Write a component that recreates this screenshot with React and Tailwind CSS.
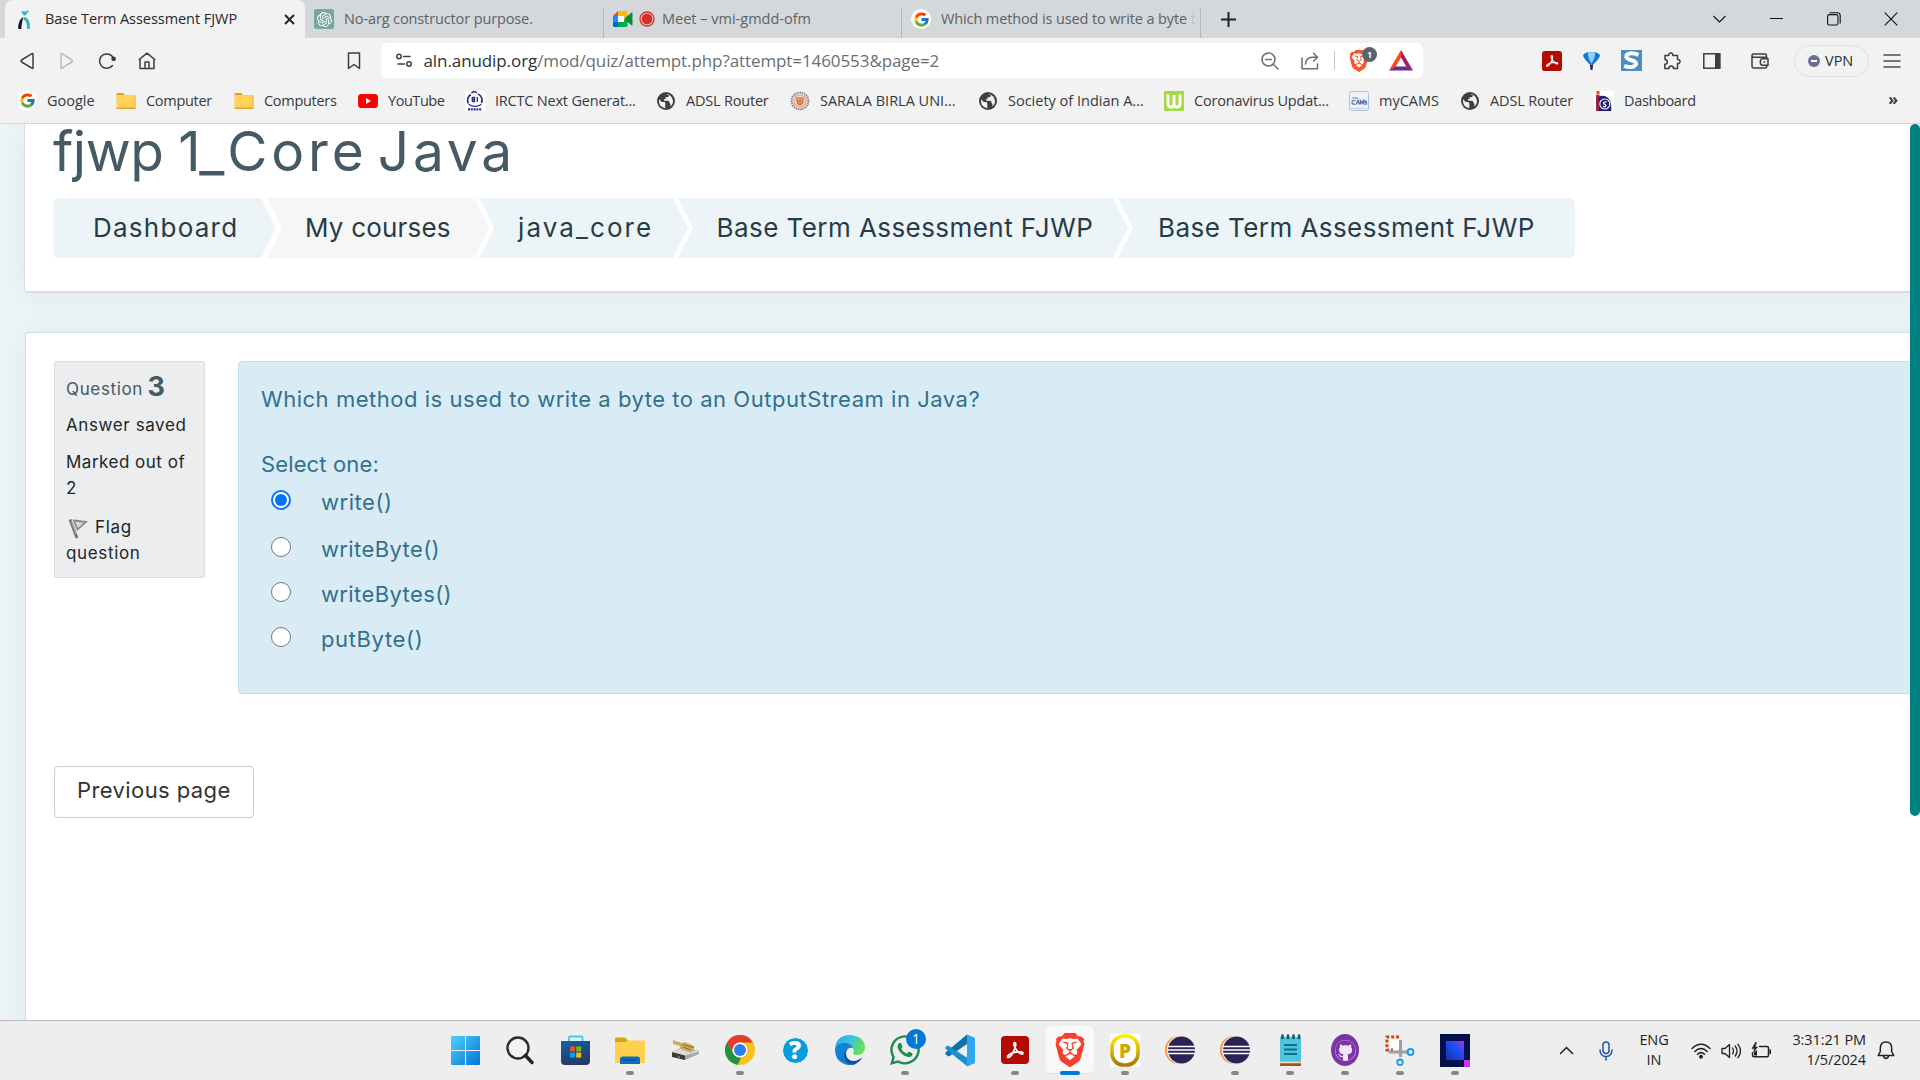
import React from "react";
import { FcGoogle } from "react-icons/fc";
import { SiBrave, SiOpenai } from "react-icons/si";
import { FaGithub, FaWhatsapp } from "react-icons/fa";

const UI = "font-['Open_Sans','Noto_Sans',sans-serif]";
const BODY = "font-['Inter','Noto_Sans',sans-serif]";

/* ---------- small drawings ---------- */
const Google = ({ size = 20 }) => (
  <span className="flex items-center justify-center rounded-full bg-white shrink-0" style={{ width: size, height: size }}>
    <FcGoogle size={size - 3} />
  </span>
);
const Folder = () => (
  <svg width="20" height="18" viewBox="0 0 20 18" className="shrink-0">
    <path d="M0.5 2Q.5 1 1.5 1H7L9 3V6H.5Z" fill="#e0a020" />
    <rect x="0.5" y="3" width="19" height="14" rx="1" fill="#ffd35a" />
    <path d="M.5 16.3H19.5" stroke="#d9a22b" strokeWidth="1.4" />
    <path d="M19 3.5V16" stroke="#e9b541" />
  </svg>
);
const YouTube = () => (
  <svg width="20" height="14" viewBox="0 0 20 14" className="shrink-0">
    <rect width="20" height="14" rx="3.5" fill="#f00" />
    <path d="M8 4L13 7L8 10Z" fill="#fff" />
  </svg>
);
const Irctc = () => (
  <svg width="20" height="20" viewBox="0 0 20 20" className="shrink-0">
    <rect width="20" height="20" fill="#fff" />
    <path d="M6 3.5A6.5 6.5 0 0 0 3.4 12.5M13 3A6.5 6.5 0 0 1 16.4 12" stroke="#2b2f86" strokeWidth="1.7" fill="none" />
    <path d="M6.5 2Q9-.5 12 2" stroke="#2b2f86" strokeWidth="1.6" fill="none" />
    <path d="M3.6 13.2Q10 17.4 16.4 13.2" stroke="#2b2f86" strokeWidth="1.2" fill="none" />
    <path d="M7.3 6V11M7.3 6.5H9.5V10.5H7.3M12.3 6V11M7.3 8.5H9.5" stroke="#2b2f86" strokeWidth="1.3" fill="none" />
    <path d="M3 18.300H17" stroke="#2b2f86" strokeWidth="2.200" strokeDasharray="2 .800" />
  </svg>
);
const Globe = () => (
  <svg width="20" height="20" viewBox="0 0 20 20" className="shrink-0">
    <circle cx="10" cy="10" r="9" fill="#3c4043" />
    <path d="M3 8.200L5.800 11H8.500Q9.500 12 9.300 13.200V17.200Q3.200 16.200 3 10Z" fill="#f2f2f2" />
    <path d="M10 3H12.500Q13.500 5.500 11.500 6.200H9.500V8.200H8V9.800H12Q13.600 10 13.600 12L14.600 13.200L14 15.500Q17 13.500 17 10Q16.400 4 10 3Z" fill="#f2f2f2" />
  </svg>
);
const Sarala = () => (
  <svg width="20" height="20" viewBox="0 0 20 20" className="shrink-0">
    <circle cx="10" cy="10" r="9.500" fill="#e9dfd9" />
    <circle cx="10" cy="10" r="8.400" fill="none" stroke="#7f7894" strokeWidth="1.800" strokeDasharray="1.300 1" />
    <circle cx="10" cy="10" r="6" fill="none" stroke="#e2a27a" strokeWidth="1.200" />
    <path d="M7 7H13V10Q13 13 10 14Q7 13 7 10Z" fill="#f4b183" stroke="#d2672e" strokeWidth="1.200" />
    <path d="M7 10H13M10 7V14" stroke="#d2672e" />
  </svg>
);
const WIcon = () => (
  <svg width="20" height="20" viewBox="0 0 20 20" className="shrink-0">
    <rect width="20" height="20" rx="1" fill="#a4da45" />
    <path d="M4 3.500V13Q4 16 7 16Q10 16 10 13V4V13Q10 16 13 16Q16 16 16 13V3.500" fill="none" stroke="#fff" strokeWidth="2.900" />
  </svg>
);
const Cams = () => (
  <svg width="20" height="20" viewBox="0 0 20 20" className="shrink-0">
    <rect x=".5" y=".5" width="19" height="19" rx="2" fill="#eef3fb" stroke="#a9c0e2" />
    <path d="M3.500 7H9" stroke="#8a8f99" strokeWidth="1.600" strokeDasharray="1.500 .400" />
    <path d="M6.500 9.600H4.200Q3 9.600 3 11.400Q3 13.200 4.200 13.200H6.500M7.300 13.400L9 9.400L10.400 13.400M11.400 13.400V9.600L12.900 12L14.300 9.600V13.400M17.600 9.800H15.800V11.400H17.400V13.200H15.400" stroke="#5674b5" strokeWidth="1.300" fill="none" />
    <path d="M1.500 17.500H18.500" stroke="#c9d8ee" strokeWidth="1.500" />
  </svg>
);
const DashIcon = () => (
  <svg width="20" height="20" viewBox="0 0 20 20" className="shrink-0">
    <rect width="20" height="20" fill="#fff" />
    <rect x="2.500" y="0" width="3" height="3.500" fill="#f0431e" />
    <path d="M2 4H5.500V20H2Z" fill="#9c2447" />
    <path d="M4.500 6Q6 4 11 5Q17.800 7 17.400 20H5Z" fill="#221f6e" />
    <circle cx="10.800" cy="13" r="5" fill="none" stroke="#fff" strokeWidth="1.100" />
    <path d="M12.500 10.800Q9 10.600 9.600 12.800Q12.500 13.500 11.800 15.300Q10.500 16.300 9 15.300" stroke="#fff" strokeWidth="1.200" fill="none" />
  </svg>
);
const Acrobat = ({ size }) => (
  <svg width={size} height={size} viewBox="0 0 28 28" className="shrink-0">
    <rect width="28" height="28" rx="4" fill="#b30b00" />
    <path d="M13.600 6.500C11.800 6.800 13.200 12 17 15.800C19.500 18 22 18.800 22 17.200C22 15.300 14.800 15.400 10.500 17.200C6.500 19 5.400 21.500 7.400 21.500C10 21.300 14.800 12.600 14.800 8.600C14.800 7.200 14.300 6.500 13.600 6.500Z" fill="none" stroke="#fff" strokeWidth="1.700" />
  </svg>
);
const Brave = ({ size, color }) => (
  <span className="relative flex items-center justify-center shrink-0" style={{ width: size, height: size }}>
    <span className="absolute left-1/4 top-[15%] h-[66%] w-1/2 rounded-b-full bg-white" />
    <SiBrave size={size} color={color} className="relative" />
  </span>
);

/* ---------- tab strip ---------- */
const TabStrip = () => (
  <div className="flex h-[38px] bg-[#d4d8db] pl-[5px] text-[14.5px] leading-[38px]">
    <div className="flex h-[38px] w-[300px] items-center rounded-t-[8px] bg-[#f2f2f2] pl-[12px]">
      <svg width="14" height="20" viewBox="0 0 14 20" className="mt-[1px]">
        <path d="M4.500 1.500L8 3L11.500 1" stroke="#2bb6bd" strokeWidth="1.500" fill="none" />
        <circle cx="7.600" cy="3.400" r="2" fill="#2bb6bd" />
        <path d="M1.200 19Q1 9.500 6.400 7.200Q5.200 10 4.200 19Z" fill="#16181b" />
        <path d="M6.500 7Q13.500 7 12.800 19H10.200Q10 10.500 6.500 9.500Z" fill="#2bb6bd" />
      </svg>
      <span className="ml-[14px] w-[239px] tracking-[-0.05px] text-[#26292c]">Base Term Assessment FJWP</span>
      <svg width="11" height="11" viewBox="0 0 11 11"><path d="M1 1L10 10M10 1L1 10" stroke="#222" strokeWidth="1.900" /></svg>
    </div>
    <div className="flex w-[299px] items-center border-r pl-[9px] text-[#5d6266] [border-image:linear-gradient(transparent_9px,#b4b8bb_9px)_1]">
      <span className="flex h-5 w-5 items-center justify-center rounded-[2px] bg-[#74aa9c]"><SiOpenai size={15} color="#fff" /></span>
      <span className="ml-[10px] tracking-[-0.12px]">No-arg constructor purpose.</span>
    </div>
    <div className="flex w-[298px] items-center border-r pl-[9px] text-[#5d6266] [border-image:linear-gradient(transparent_9px,#b4b8bb_9px)_1]">
      <svg width="20" height="16" viewBox="0 0 20 16">
        <path d="M0 5L5 0V5Z" fill="#ea4335" /><path d="M5 0H13Q14.500 0 14.500 1.500V8L11 6V5H5Z" fill="#fbbc04" />
        <path d="M0 5H5V11H0Z" fill="#2684fc" /><path d="M0 11H5V16H1.500Q0 16 0 14.500Z" fill="#0066da" />
        <path d="M5 11H11V9L14.500 8V14.500Q14.500 16 13 16H5Z" fill="#00ac47" /><path d="M11 8L18.500 1.500Q19.500 1.200 19.500 2.500V13.500Q19.500 14.800 18.500 14.300Z" fill="#0a8a3c" />
        <path d="M5 5H11V11H5Z" fill="#fff" />
      </svg>
      <svg width="16" height="16" viewBox="0 0 16 16" className="ml-[6px]"><circle cx="8" cy="8" r="7" fill="none" stroke="#d93025" strokeWidth="1.300" /><circle cx="8" cy="8" r="5.400" fill="#d93025" /></svg>
      <span className="ml-[7px]">Meet – vmi-gmdd-ofm</span>
    </div>
    <div className="flex w-[299px] items-center border-r pl-[9px] text-[#5d6266] [border-image:linear-gradient(transparent_9px,#b4b8bb_9px)_1]">
      <Google />
      <span className="ml-[10px] tracking-[-0.12px]">Which method is used to write a byte <span className="text-[#bfc3c6]">t</span></span>
    </div>
    <div className="flex flex-1 items-center pl-[20px] pr-[22px]">
      <svg width="15" height="15" viewBox="0 0 15 15"><path d="M7.500 0V15M0 7.500H15" stroke="#222" strokeWidth="2" /></svg>
      <div className="ml-auto flex items-center">
        <svg width="13" height="8" viewBox="0 0 13 8" className="mr-[44px]"><path d="M.5 1L6.500 7L12.500 1" stroke="#111" fill="none" strokeWidth="1.100" /></svg>
        <svg width="13" height="2" viewBox="0 0 13 2" className="mr-[44px]"><path d="M0 .5H13" stroke="#111" strokeWidth="1" /></svg>
        <svg width="14" height="14" viewBox="0 0 14 14" className="mr-[43px]"><rect x=".600" y="2.600" width="10.400" height="10.400" rx="1.800" fill="none" stroke="#111" strokeWidth="1.100" /><path d="M2.500 .700H10.500Q13.200 .700 13.200 3.400V11.500" fill="none" stroke="#111" strokeWidth="1.100" /></svg>
        <svg width="14" height="14" viewBox="0 0 14 14"><path d="M.700 .700L13.300 13.300M13.300 .700L.700 13.300" stroke="#111" strokeWidth="1.100" /></svg>
      </div>
    </div>
  </div>
);

/* ---------- toolbar ---------- */
const line = { fill: "none", stroke: "#3b3f43", strokeWidth: 1.5, strokeLinecap: "round", strokeLinejoin: "round" };
const Toolbar = () => (
  <div className="flex h-[45px] items-center pl-[19px] pr-[19px]">
    <svg width="16" height="18" viewBox="0 0 16 18" {...line}><path d="M14 2.200V15.800Q14 17 13 16.200L2.600 10Q1.400 9 2.600 8L13 1.600Q14 1 14 2.200Z" /></svg>
    <svg width="16" height="18" viewBox="0 0 16 18" {...line} stroke="#b9bcbf" className="ml-[24px]"><path d="M2 2.200V15.800Q2 17 3 16.200L12.900 10Q14 9 12.900 8L3 1.600Q2 1 2 2.200Z" /></svg>
    <svg width="19" height="18" viewBox="0 0 19 18" {...line} className="ml-[23px]"><path d="M14.500 13.500A7.200 7.200 0 1 1 15.500 6.500" /><circle cx="15.600" cy="6.800" r="1.600" fill="#3b3f43" /></svg>
    <svg width="18" height="18" viewBox="0 0 18 18" {...line} className="ml-[21px]"><path d="M1.200 7.500L9 1.200L16.800 7.500M2 7V16.500H16V7M7 16.500V10H11V16.500" /></svg>
    <svg width="14" height="18" viewBox="0 0 14 18" {...line} className="ml-[191px]"><path d="M1.500 1H12.500V16.500L7 12.500L1.500 16.500Z" /></svg>
    <div className="ml-[20px] flex h-[35px] w-[1042px] items-center rounded-[6px] bg-white pl-[15px] pr-[10px]">
      <svg width="16" height="15" viewBox="0 0 16 15" {...line}><circle cx="3" cy="3.500" r="2.200" /><path d="M7.500 3.500H14" /><circle cx="13" cy="11" r="2.200" /><path d="M2 11H8.500" /></svg>
      <span className="ml-[11.5px] whitespace-nowrap text-[17px] tracking-[-0.09px] text-[#6a6e72]"><span className="text-[#2d3135]">aln.anudip.org</span>/mod/quiz/attempt.php?attempt=1460553&amp;page=2</span>
      <div className="ml-auto flex items-center">
        <svg width="18" height="18" viewBox="0 0 18 18" {...line} stroke="#6b6f73"><circle cx="7.500" cy="7.500" r="6.500" /><path d="M12.300 12.300L17 17M4.700 7.500H10.300" /></svg>
        <svg width="18" height="18" viewBox="0 0 18 18" {...line} stroke="#6b6f73" className="ml-[22px]"><path d="M1 6V16.800H16.500V12M4.500 12Q5 5.500 11 5.200H15.500M12.500 1.200L16.500 5.200L12.500 9" /></svg>
        <span className="ml-[15px] h-[19px] w-px bg-[#c4c6c8]" />
        <span className="relative ml-[13px] flex">
          <Brave size={22} color="#fb542b" />
          <span className="absolute -top-[3px] left-[14px] h-[15px] w-[15px] rounded-full bg-[#5c6370] text-center text-[9px] font-bold leading-[15px] text-white">1</span>
        </span>
        <svg width="24" height="21" viewBox="0 0 24 21" className="ml-[19px]">
          <path d="M12 0L0 20.500L6.500 17L12 7.500Z" fill="#ff4724" /><path d="M12 0L24 20.500L17.500 17L12 7.500Z" fill="#9e1f63" /><path d="M0 20.500H24L17.500 16.500H6.500Z" fill="#662d91" />
        </svg>
      </div>
    </div>
    <div className="ml-auto flex items-center">
      <Acrobat size={20} />
      <svg width="19" height="20" viewBox="0 0 19 20" className="ml-[20px]">
        <path d="M1 4.500Q2 1 9.500 1Q17 1 18 4.500Q17 8 11.200 13.500H7.800Q2 8 1 4.500Z" fill="#1477d4" /><path d="M6 1.800Q9.500 0 13 1.800Q13.500 7 9.500 12.500Q5.500 7 6 1.800Z" fill="#8fd2fb" /><path d="M7.800 13.500H11.200L10.500 19H8.500Z" fill="#23364f" />
      </svg>
      <svg width="21" height="21" viewBox="0 0 21 21" className="ml-[20px]">
        <rect x=".5" y=".5" width="20" height="20" fill="#4b8ec4" stroke="#4b8ec4" />
        <path d="M17.500 4.800Q10 2 6 4.600Q3.800 7.600 8.500 9.600L13.500 11.400Q17 14 13 16.300Q8.500 18 3.200 15.800" fill="none" stroke="#fff" strokeWidth="4" />
      </svg>
      <svg width="18" height="18" viewBox="0 0 18 18" {...line} className="ml-[21px]"><path d="M2 3.500H5.800Q5.500 1 7.800 1Q10 1 9.800 3.500H14.500V7.500Q17 7.300 17 9.500Q17 11.800 14.500 11.500V16.500H10.500Q10.500 14 8.200 14Q6 14 6 16.500H1.800V12.300Q4.300 12.200 4.300 10Q4.300 7.800 2 7.500Z" /></svg>
      <svg width="18" height="16" viewBox="0 0 18 16" className="ml-[22px]"><rect x=".800" y=".800" width="16" height="14.400" fill="none" stroke="#3b3f43" strokeWidth="1.500" /><rect x="12" y=".5" width="5.200" height="15" fill="#3b3f43" /></svg>
      <svg width="18" height="16" viewBox="0 0 18 16" {...line} className="ml-[30px]"><path d="M15.500 4V2.500Q15.500 1 14 1H2.500Q1 1 1 2.500V13Q1 15 2.800 15H14Q15.800 15 15.800 13M1 2.600Q1 4.200 2.800 4.200H15.800V5.500M17 5.800H11.500Q9.300 5.800 9.300 9Q9.300 12.300 11.500 12.300H17ZM13 9H13.600" /></svg>
      <span className="ml-[25px] flex h-[32px] w-[75px] items-center rounded-full border border-[#dfe0e2] pl-[13px] text-[14.5px] tracking-[0px] text-[#2b2f33]">
        <span className="mr-[5px] flex h-[12px] w-[12px] items-center justify-center rounded-full bg-[#6b7090]"><span className="h-[2px] w-[6px] bg-white" /></span>VPN
      </span>
      <svg width="18" height="14" viewBox="0 0 18 14" className="ml-[14px]"><path d="M.5 1H17.500M.5 7H17.500M.5 13H17.500" stroke="#4a4e53" strokeWidth="1.500" /></svg>
    </div>
  </div>
);

/* ---------- bookmarks ---------- */
const bookmarks = [
  [<Google />, "Google", "w-[99px]"],
  [<Folder />, "Computer", "w-[118px] tracking-[-0.3px]"],
  [<Folder />, "Computers", "w-[124px] tracking-[-0.3px]"],
  [<YouTube />, "YouTube", "w-[107px] tracking-[-0.45px]"],
  [<Irctc />, "IRCTC Next Generat...", "w-[191px] tracking-[-0.2px]"],
  [<Globe />, "ADSL Router", "w-[134px] tracking-[-0.2px]"],
  [<Sarala />, "SARALA BIRLA UNI...", "w-[188px]"],
  [<Globe />, "Society of Indian A...", "w-[186px] tracking-[0px]"],
  [<WIcon />, "Coronavirus Updat...", "w-[185px] tracking-[-0.2px]"],
  [<Cams />, "myCAMS", "w-[111px] tracking-[0px]"],
  [<Globe />, "ADSL Router", "w-[134px] tracking-[-0.15px]"],
  [<DashIcon />, "Dashboard", "w-[120px] tracking-[-0.35px]"],
];
const Bookmarks = () => (
  <div className="flex h-[41px] items-center border-b border-[#d4d5d7] pb-[5px] pl-[17px] pr-[22px] text-[14.5px] text-[#36393d]">
    {bookmarks.map(([icon, label, cls], i) => (
      <div key={i} className={"flex shrink-0 items-center gap-[10px] whitespace-nowrap " + cls}>
        {icon}
        <span>{label}</span>
      </div>
    ))}
    <span className="ml-auto pb-[3px] text-[16px] font-bold leading-none">»</span>
  </div>
);

/* ---------- page ---------- */
const crumbs = [
  ["Dashboard", "w-[223px] pl-[40px] bg-[#ecf4f8] tracking-[1.25px] rounded-l-[6px] [clip-path:polygon(0_0,calc(100%-15px)_0,100%_50%,calc(100%-15px)_100%,0_100%)]"],
  ["My courses", "w-[222px] -ml-[9px] pl-[38px] bg-[#f6f6f6] tracking-[0.2px] [clip-path:polygon(0_0,calc(100%-15px)_0,100%_50%,calc(100%-15px)_100%,0_100%,15px_50%)]"],
  ["java_core", "w-[209px] -ml-[10px] pl-[39px] bg-[#ecf4f8] tracking-[2.1px] [clip-path:polygon(0_0,calc(100%-15px)_0,100%_50%,calc(100%-15px)_100%,0_100%,15px_50%)]"],
  ["Base Term Assessment FJWP", "w-[450px] -ml-[10px] pl-[38.5px] bg-[#ecf4f8] tracking-[0.44px] [clip-path:polygon(0_0,calc(100%-15px)_0,100%_50%,calc(100%-15px)_100%,0_100%,15px_50%)]"],
  ["Base Term Assessment FJWP", "w-[457px] -ml-[10px] pl-[40px] bg-[#ecf4f8] tracking-[0.44px] rounded-r-[6px] [clip-path:polygon(0_0,100%_0,100%_100%,0_100%,15px_50%)]"],
];
const answers = [
  ["write()", "mt-[16px] tracking-[0.55px]", true],
  ["writeByte()", "mt-[25px] tracking-[0.4px]", false],
  ["writeBytes()", "mt-[23px] tracking-[0.4px]", false],
  ["putByte()", "mt-[23px] tracking-[0.65px]", false],
];
const Page = () => (
  <main className={"flex h-[896px] overflow-hidden bg-[#ebf4f7] " + BODY}>
    <div className="flex w-[1910px] flex-col overflow-hidden pl-[24px]">
      <header className="h-[169px] w-[1900px] shrink-0 rounded-b-[4px] border-b-2 border-l border-[#d9e0e4] bg-white pl-[28px] shadow-[0_4px_30px_rgba(0,0,0,0.05)]">
        <h1 className="-mt-[3px] h-[60px] whitespace-nowrap text-[55px] leading-[60px] tracking-[3.8px] text-[#455a64] [word-spacing:-9px]">
          <span className="tracking-[-0.5px] [word-spacing:0px]">fjwp 1</span><span className="-ml-[1px] tracking-[3px]">_</span>Core Java
        </h1>
        <nav className="mt-[17px] flex h-[60px] text-[26px] leading-[60px] text-[#263c47]">
          {crumbs.map(([t, cls], i) => (
            <span key={i} className={"shrink-0 whitespace-nowrap " + cls}>{t}</span>
          ))}
        </nav>
      </header>
      <section className="relative ml-px mt-[39px] h-[720px] w-[1900px] shrink-0 rounded-t-[4px] border-l border-t border-[#d3dce1] bg-white pl-[28px] pt-[28px] shadow-[0_0_30px_rgba(0,0,0,0.05)]">
        <div className="flex items-start">
          <aside className="h-[217px] w-[152px] rounded-[2px] border border-[#dcdfe2] bg-[#ecedef] pl-[11px] text-[17px] leading-[26px] text-[#212529]">
            <h3 className="mt-[7px] h-[36px] whitespace-nowrap leading-[36px] tracking-[0.65px] text-[#455a64]"><span className="relative -top-[1px]">Question</span> <b className="-ml-[1px] text-[27px] font-bold">3</b></h3>
            <div className="mt-[7px] tracking-[0.6px]">Answer saved</div>
            <div className="mt-[11px] tracking-[0.5px]">Marked out of<br />2</div>
            <div className="mt-[13px] tracking-[0.65px]">
              <svg width="24" height="22" viewBox="0 0 24 22" className="mr-[5px] inline-block align-[-7px]">
                <path d="M4 1.500L11 20" stroke="#777" strokeWidth="3" /><path d="M8 2.500L20 4L11.500 11.500Z" fill="#d8d9da" stroke="#8b8b8b" strokeWidth="1.800" /><path d="M5.500 3L10 16" stroke="#b5b5b5" />
              </svg>Flag<br />question
            </div>
          </aside>
          <div className="ml-[33px] h-[333px] w-[1700px] rounded-[4px] border border-[#bce0f1] bg-[#d9ecf5] pl-[22px] text-[22px] leading-none text-[#31708f]">
            <p className="mt-[26px] h-[22px] tracking-[0.53px]">Which method is used to write a byte to an OutputStream in Java?</p>
            <p className="mt-[43px] h-[22px] tracking-[0.15px]">Select one:</p>
            {answers.map(([t, cls, on]) => (
              <label key={t} className={"flex h-[22px] items-center " + cls}>
                <span className={"-mt-[4px] ml-[10px] flex h-[20px] w-[20px] shrink-0 items-center justify-center rounded-full bg-white " + (on ? "border-2 border-[#0a75ff]" : "border-[1.5px] border-[#767676]")}>
                  {on && <span className="h-[12px] w-[12px] rounded-full bg-[#0075ff]" />}
                </span>
                <span className="ml-[30px]">{t}</span>
              </label>
            ))}
          </div>
        </div>
        <button className="mt-[72px] block h-[52px] w-[200px] rounded-[4px] border-[1.5px] border-[#cdcdcd] bg-white pb-[3px] pl-[22px] text-left text-[22px] tracking-[0.4px] text-[#333]">Previous page</button>
      </section>
    </div>
    <div className="w-[10px] bg-white"><div className="h-[692px] rounded-full bg-[#008080]" /></div>
  </main>
);

/* ---------- taskbar ---------- */
const Windows = () => (
  <svg width="29" height="29" viewBox="0 0 29 29"><defs><linearGradient id="win" x1="0" y1="0" x2="1" y2="1"><stop offset="0" stopColor="#4fd0fb" /><stop offset="1" stopColor="#0673d6" /></linearGradient></defs>
    <path d="M1 0H14V14H0V1Q0 0 1 0ZM15 0H28Q29 0 29 1V14H15ZM0 15H14V29H1Q0 29 0 28ZM15 15H29V28Q29 29 28 29H15Z" fill="url(#win)" /></svg>
);
const Search = () => (
  <svg width="28" height="29" viewBox="0 0 28 29"><circle cx="12" cy="12" r="10.500" fill="#f3f3f3" stroke="#2b2b2b" strokeWidth="2.400" /><path d="M19.500 19.500L26 26.500" stroke="#222" strokeWidth="3.400" strokeLinecap="round" /></svg>
);
const Store = () => (
  <svg width="29" height="30" viewBox="0 0 29 30"><defs><linearGradient id="store" x1="0" y1="0" x2="0.4" y2="1"><stop offset="0" stopColor="#0f62ab" /><stop offset="1" stopColor="#253b66" /></linearGradient></defs>
    <path d="M8 7V2.500Q8 1.500 9 1.500H20.500Q21.500 1.500 21.500 2.500V7" fill="none" stroke="#3ccbf4" strokeWidth="1.800" />
    <path d="M0 6H29V26Q29 30 25 30H4Q0 30 0 26Z" fill="url(#store)" />
    <path d="M9 11.500H14V16.500H9Z" fill="#f25022" /><path d="M15.200 11.500H20.200V16.500H15.200Z" fill="#7fba00" /><path d="M9 17.600H14V22.600H9Z" fill="#00a4ef" /><path d="M15.200 17.600H20.200V22.600H15.200Z" fill="#ffb900" /></svg>
);
const Explorer = () => (
  <svg width="30" height="27" viewBox="0 0 30 27"><path d="M0 2Q0 .5 1.500 .5H10L13 3.500V8H0Z" fill="#e0a010" /><path d="M0 5H11L13 3.500H29Q30 3.500 30 4.500V26H0Z" fill="#ffd04e" /><path d="M5 27V22Q5 19.500 7.500 19.500H22.500Q25 19.500 25 22V27Z" fill="#0f6cbd" /><path d="M8 23H22" stroke="#0a4a8c" strokeWidth="1.200" /></svg>
);
const Disk = () => (
  <svg width="29" height="22" viewBox="0 0 29 22"><path d="M1 13L12 8L28 12V15L14 21L1 17Z" fill="#a8a8a8" /><path d="M1 13L14 16V21L1 18Z" fill="#3a3c3a" /><path d="M1 13L12 9L28 12.500L14 16.500Z" fill="#dcdcdc" /><path d="M2 1L11 4L14 3L23 7V12L19 13.500L9 10V7L2 5Z" fill="#cfae62" /><path d="M11 5.500L23 8.500M12 8L20 11" stroke="#8a6a25" /><path d="M8 19V17" stroke="#4caf50" strokeWidth="1.500" /></svg>
);
const Chrome = () => (
  <svg width="30" height="30" viewBox="0 0 48 48"><circle cx="24" cy="24" r="24" fill="#fbc116" /><path d="M3.200 12A24 24 0 0 1 44.800 12H24A12 12 0 0 0 13.600 30Z" fill="#e33b2e" /><path d="M3.200 12L13.600 30Q18 36.500 26 36L20 47.800A24 24 0 0 1 3.200 12Z" fill="#229342" /><path d="M34.400 30L24 48H22L28 35Z" fill="#fbc116" /><circle cx="24" cy="24" r="12" fill="#fff" /><circle cx="24" cy="24" r="9.600" fill="#2f7df0" /></svg>
);
const Help = () => (
  <span className="flex h-[27px] w-[27px] items-center justify-center rounded-full border border-white bg-[#0a9bdc] text-[24px] font-extrabold leading-none text-white">?</span>
);
const Edge = () => (
  <svg width="30" height="30" viewBox="0 0 30 30"><defs><linearGradient id="edgeTop" x1="0" y1="0" x2="1" y2="0.300"><stop offset="0" stopColor="#2aa8dd" /><stop offset="0.500" stopColor="#35c1e8" /><stop offset="1" stopColor="#66e05a" /></linearGradient></defs>
    <path d="M0 14Q1 0 15 0Q29 1 30 12Q30 20 22 20Q17 20 18.500 17Q20 12.500 14 10Q5 8 0 14Z" fill="url(#edgeTop)" />
    <path d="M0 14Q3 7 11 8Q17 9 18 13Q12 12 11 18Q11 27 22 28.500Q18 30.500 13 30Q0 27.500 0 14Z" fill="#1280d6" />
    <path d="M11.500 15Q9 20 13 24Q19 29 27.500 22Q24.500 28 18 29.700Q10 29 9 21Q9 17 11.500 15Z" fill="#12529e" /></svg>
);
const WhatsApp = () => (
  <span className="relative flex"><FaWhatsapp size={34} color="#1f8b53" /><span className="absolute -top-[4px] left-[18px] h-[20px] w-[20px] rounded-full bg-[#0078d7] text-center text-[14px] leading-[20px] text-white">1</span></span>
);
const VsCode = () => (
  <svg width="30" height="33" viewBox="0 0 30 33"><path d="M22 .5V10L4 22.500L.5 20.500V18.500Z" fill="#0f70ad" /><path d="M.5 13L3 11.500L22.500 24V32.500L.5 14.800Z" fill="#1b8ed0" /><path d="M22 .5L29 3.500Q30 4 30 5V28Q30 29 29 29.500L22 32.500Z" fill="#2fa7ee" /></svg>
);
const PIcon = () => (
  <svg width="30" height="33" viewBox="0 0 30 33"><defs><linearGradient id="pring" x1="0" y1="0" x2="0" y2="1"><stop offset="0" stopColor="#fff000" /><stop offset="1" stopColor="#b07800" /></linearGradient></defs>
    <rect width="30" height="33" fill="#fff" /><rect x="2" y="2" width="26" height="29" rx="11.500" fill="#fff" stroke="url(#pring)" strokeWidth="3.600" />
    <text x="15" y="23.500" textAnchor="middle" fontFamily="Open Sans" fontWeight="800" fontSize="19" fill="#cfa800">P</text></svg>
);
const Eclipse = () => (
  <svg width="30" height="30" viewBox="0 0 30 30"><circle cx="14" cy="15" r="14" fill="#f7941e" /><circle cx="16" cy="15" r="14.300" fill="#eeeeee" /><circle cx="16.500" cy="15" r="13.500" fill="#2c2255" /><path d="M3 11.500H30M3 15H30M3 18.500H30" stroke="#fff" strokeWidth="1.600" /></svg>
);
const Notepad = () => (
  <svg width="23" height="33" viewBox="0 0 23 33"><rect x="1" y="3" width="21" height="27" fill="#50c3dc" /><path d="M1 29H22V32H1Z" fill="#a55312" /><path d="M1 28.500H22" stroke="#f0e4d0" strokeWidth="1.500" /><path d="M5 11H18M5 15.500H18M5 20H18" stroke="#0d6f8f" strokeWidth="1.800" /><path d="M3.500 1.500V4M9 1.500V4M14.500 1.500V4M20 1.500V4" stroke="#0d5a75" strokeWidth="2.600" strokeLinecap="round" /></svg>
);
const Github = () => (
  <span className="flex h-[32px] w-[28px] items-center justify-center rounded-[50%] bg-[#7a34a8]"><span className="flex items-center justify-center rounded-full bg-[#f3e6fa]"><FaGithub size={21} color="#7a34a8" /></span></span>
);
const Snip = () => (
  <svg width="30" height="31" viewBox="0 0 30 31"><rect x="2" y="2" width="12" height="13" fill="#fff" /><path d="M14 2H2V15H8" fill="none" stroke="#d2450f" strokeWidth="3" strokeDasharray="3 1.800" /><path d="M15.500 5V22M4 17H24" stroke="#9aa0a6" strokeWidth="3" /><circle cx="25.500" cy="17" r="3" fill="none" stroke="#1a9be6" strokeWidth="1.800" /><circle cx="15" cy="27.300" r="2.800" fill="none" stroke="#1a9be6" strokeWidth="1.800" /></svg>
);
const Squares = () => (
  <svg width="30" height="33" viewBox="0 0 30 33"><defs><linearGradient id="sq" x1="1" y1="0" x2="0" y2="1"><stop offset="0" stopColor="#b02df0" /><stop offset="0.400" stopColor="#1d4ff5" /><stop offset="1" stopColor="#1a2fae" /></linearGradient></defs>
    <rect width="30" height="33" fill="#04104a" /><rect x="6" y="7" width="18" height="19" fill="url(#sq)" /><rect x="24" y="26" width="6" height="7" fill="#c239e8" /></svg>
);
const apps = [
  [<Windows />, 0], [<Search />, 0], [<Store />, 0], [<Explorer />, 1], [<Disk />, 0], [<Chrome />, 1], [<Help />, 0], [<Edge />, 0], [<WhatsApp />, 1], [<VsCode />, 0],
  [<Acrobat size={28} />, 1], [<Brave size={34} color="#f6402c" />, 2], [<PIcon />, 1], [<Eclipse />, 0], [<Eclipse />, 1], [<Notepad />, 1], [<Github />, 1], [<Snip />, 1], [<Squares />, 1],
];
const tray = { fill: "none", stroke: "#222", strokeWidth: 1.5, strokeLinecap: "round", strokeLinejoin: "round" };
const Taskbar = () => (
  <footer className="flex h-[60px] items-center border-t border-[#b9b9b9] bg-[#eeeeee] pl-[437.5px] pr-[25px] text-[14.5px] leading-[20px] text-[#1d1d1d]">
    {apps.map(([icon, state], i) => (
      <div key={i} className="relative flex h-[59px] w-[55px] shrink-0 items-center justify-center pb-[1px]">
        <div className={"flex h-[48px] w-[48px] items-center justify-center rounded-[5px] " + (state === 2 ? "border-b border-[#e0e0e0] bg-[#f8f8f8]" : "")}>{icon}</div>
        {state === 1 && <span className="absolute bottom-[5px] h-[4px] w-[8px] rounded-full bg-[#868686]" />}
        {state === 2 && <span className="absolute bottom-[5px] h-[4px] w-[20px] rounded-full bg-[#0078d7]" />}
      </div>
    ))}
    <div className="ml-auto flex items-center">
      <svg width="15" height="9" viewBox="0 0 15 9" {...tray}><path d="M1.500 7.500L7.500 1.500L13.500 7.500" /></svg>
      <svg width="14" height="20" viewBox="0 0 14 20" {...tray} stroke="#1d54a8" className="ml-[25px]"><rect x="4" y="1" width="6" height="11.500" rx="3" /><path d="M1 9Q1.300 15.500 7 15.500Q12.700 15.500 13 9M7 15.500V19" /></svg>
      <div className="ml-[26px] w-[30px] pb-[1px] text-center tracking-[-0.1px]">ENG<br />IN</div>
      <svg width="20" height="16" viewBox="0 0 20 16" {...tray} className="ml-[22px]"><path d="M1 5.500Q10-3 19 5.500M3.800 8.500Q10 2.500 16.200 8.500M6.500 11.300Q10 8 13.500 11.300" /><circle cx="10" cy="13.800" r="1.200" fill="#222" /></svg>
      <svg width="21" height="16" viewBox="0 0 21 16" {...tray} strokeWidth="1.300" className="ml-[10px]"><path d="M1 5.500H4L8.500 1.500V14.500L4 10.500H1Z" /><path d="M11.500 5Q13.500 8 11.500 11M14.200 3Q17.800 8 14.200 13M17 1.300Q22 8 17 14.700" /></svg>
      <svg width="21" height="17" viewBox="0 0 21 17" {...tray} className="ml-[9px]"><path d="M8.500 4.500H16Q17.500 4.500 17.500 6V13Q17.500 14.800 16 14.800H3Q1.500 14.800 1.500 13V11M19.300 8V11.500" /><path d="M4.500 .5L1 6.500H3.500L2.500 10.500L6.500 5H4L5.500 .5Z" fill="#222" strokeWidth=".600" /><path d="M3 13.500V10.500L6 8V13.500Z" fill="#222" stroke="none" /></svg>
      <div className="ml-[18px] mr-[1px] w-[76px] whitespace-nowrap pb-[2px] text-right tracking-[-0.1px]">3:31:21 PM<br />1/5/2024</div>
      <svg width="18" height="19" viewBox="0 0 18 19" {...tray} className="ml-[10px]"><path d="M9 1Q3.500 1 3.300 7V10.500L1.200 14.500H16.800L14.700 10.500V7Q14.500 1 9 1ZM6.500 14.800Q7 17.500 9 17.500Q11 17.500 11.500 14.800" /></svg>
    </div>
  </footer>
);

export default function App() {
  return (
    <div className={"flex h-[1080px] w-[1920px] flex-col overflow-hidden bg-[#f2f2f2] " + UI}>
      <TabStrip />
      <Toolbar />
      <Bookmarks />
      <Page />
      <Taskbar />
    </div>
  );
}
